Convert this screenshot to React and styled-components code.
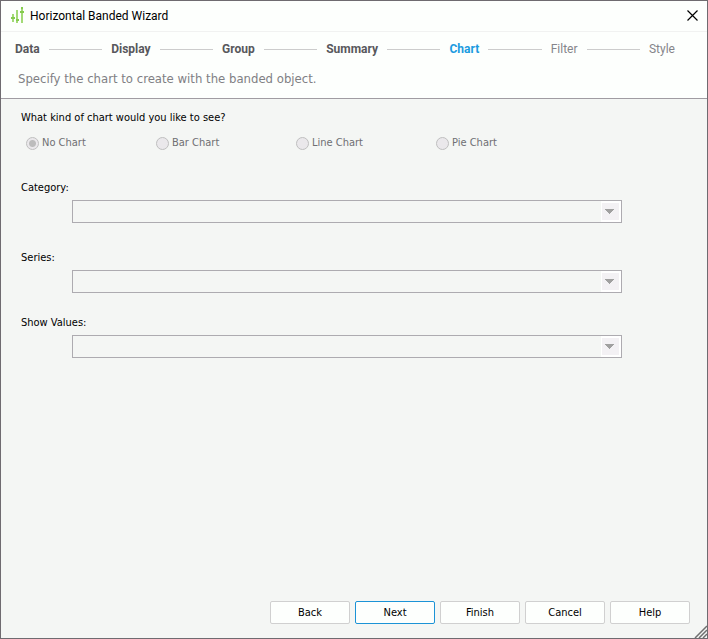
import React from "react";
import styled, { createGlobalStyle } from "styled-components";

const steps = ["Data", "Display", "Group", "Summary", "Chart", "Filter", "Style"];
const current = 4;
const charts = ["No Chart", "Bar Chart", "Line Chart", "Pie Chart"];
const actions = ["Back", "Next", "Finish", "Cancel", "Help"];

export default function App() {
  return (
    <>
      <GlobalStyle />
      <Window>
        {/* title bar */}
        <TitleBar>
          <Logo />
          <Title>Horizontal Banded Wizard</Title>
          <CloseButton type="button" aria-label="Close">
            <svg width="11" height="12" viewBox="0 0 11 12">
              <path d="M0.5 0.5L10.5 10.5M10.5 0.5L0.5 10.5" stroke="#000" strokeWidth="1.2" />
            </svg>
          </CloseButton>
        </TitleBar>

        {/* steps */}
        <Header>
          <Steps>
            {steps.map((step, i) => (
              <React.Fragment key={step}>
                {i > 0 && <StepLine aria-hidden="true" />}
                <Step $active={i === current} $pending={i > current}>
                  {step}
                </Step>
              </React.Fragment>
            ))}
          </Steps>
          <Description>Specify the chart to create with the banded object.</Description>
        </Header>

        {/* form */}
        <Form>
          <ChartTypes disabled>
            <legend>What kind of chart would you like to see?</legend>
            <Options>
              {charts.map((chart, i) => (
                <Option key={chart}>
                  <Radio type="radio" name="chart" defaultChecked={i === 0} />
                  {chart}
                </Option>
              ))}
            </Options>
          </ChartTypes>
          <SelectField id="category" label="Category:" $space={31} />
          <SelectField id="series" label="Series:" $space={28} />
          <SelectField id="values" label="Show Values:" $space={23} />
        </Form>

        {/* buttons */}
        <Footer>
          {actions.map((action) => (
            <Button key={action} type="button" $primary={action === "Next"}>
              {action}
            </Button>
          ))}
        </Footer>
        <Grip width="13" height="13" viewBox="0 0 13 13" aria-hidden="true">
          <path d="M1 13L13 1M5 13L13 5M9 13L13 9" stroke="#707070" strokeWidth="1.5" />
        </Grip>
      </Window>
    </>
  );
}

function Logo() {
  return (
    <svg width="13" height="18" viewBox="0 0 13 18" aria-hidden="true">
      <g fill="#a3da76">
        <rect x="1" y="7" width="2" height="8" />
        <rect x="5" y="3" width="2" height="13" />
        <rect x="10" y="0" width="2" height="16" />
      </g>
      <g fill="#84cb4e">
        <rect x="0" y="10" width="4" height="2" />
        <rect x="5" y="12" width="3" height="2" />
        <rect x="9" y="4" width="4" height="2" />
        <rect x="10" y="0" width="2" height="2" />
      </g>
    </svg>
  );
}

function SelectField({ id, label, $space }) {
  return (
    <Field $space={$space}>
      <label htmlFor={id}>{label}</label>
      <SelectBox>
        <Select id={id} disabled />
        <Arrow>
          <svg width="9" height="5" viewBox="0 0 9 5" shapeRendering="crispEdges">
            <path d="M0 0H9V1H8V2H7V3H6V4H5V5H4V4H3V3H2V2H1V1H0Z" fill="#a0a0a0" />
          </svg>
        </Arrow>
      </SelectBox>
    </Field>
  );
}

const GlobalStyle = createGlobalStyle`
  * {
    box-sizing: border-box;
  }
  body {
    margin: 0;
    color: #000;
    font-family: "DejaVu Sans Condensed", "Noto Sans", sans-serif;
    font-size: 11px;
    line-height: 14px;
  }
  button, select {
    font: inherit;
  }
`;

const Window = styled.div`
  position: relative;
  display: flex;
  flex-direction: column;
  min-height: 100vh;
  background: #f4f6f4;
  border: 1px solid #6f6b70;
`;

const TitleBar = styled.header`
  display: flex;
  align-items: center;
  gap: 6px;
  height: 31px;
  padding: 0 9px 0 10px;
  background: #fdfffd;
  border-bottom: 1px solid #f1f2f1;
`;

const Title = styled.h1`
  flex: 1;
  margin: 0;
  font-family: Roboto, sans-serif;
  font-size: 12px;
  font-weight: 400;
  line-height: 16px;
`;

const CloseButton = styled.button`
  display: flex;
  padding: 0;
  background: none;
  border: 0;
`;

const Header = styled.div`
  height: 67px;
  padding: 9px 32px 0 14px;
  background: #fdfffd;
  border-bottom: 1px solid #a09ca2;
`;

const Steps = styled.div`
  display: flex;
  align-items: center;
  gap: 9px;
`;

const Step = styled.span`
  color: ${(p) => (p.$active ? "#1c9be0" : p.$pending ? "#85858a" : "#58585c")};
  font-family: Roboto, sans-serif;
  font-size: 12px;
  font-weight: ${(p) => (p.$pending ? 400 : 700)};
  line-height: 16px;
`;

const StepLine = styled.i`
  flex: 1;
  height: 1px;
  background: #cccccc;
`;

const Description = styled.p`
  margin: 13px 0 0 3px;
  color: #808084;
  font-size: 13px;
  line-height: 18px;
`;

const Form = styled.form`
  flex: 1;
  padding: 12px 85px 0 20px;
`;

const ChartTypes = styled.fieldset`
  margin: 0;
  padding: 0;
  border: 0;

  legend {
    padding: 0;
  }
`;

const Options = styled.div`
  display: grid;
  grid-template-columns: 130px 140px 140px auto;
  padding: 11px 0 0 5px;
`;

const Option = styled.label`
  display: flex;
  align-items: center;
  gap: 3px;
  color: #6f6f73;
`;

const Radio = styled.input`
  appearance: none;
  width: 13px;
  height: 13px;
  margin: 0;
  background: #eae8eb;
  border: 1px solid #bfbfbf;
  border-radius: 50%;

  &:checked {
    background: radial-gradient(circle, #bcbcbc 3px, #eae8eb 4px);
  }
`;

const Field = styled.div`
  display: flex;
  flex-direction: column;
  gap: 5px;
  margin-top: ${(p) => p.$space}px;
`;

const SelectBox = styled.div`
  position: relative;
  margin-left: 51px;
`;

const Select = styled.select`
  appearance: none;
  display: block;
  width: 100%;
  height: 23px;
  background: #f4f6f4;
  border: 1px solid #adabb0;
  border-radius: 0;
  opacity: 1;
`;

const Arrow = styled.span`
  position: absolute;
  top: 1px;
  right: 1px;
  display: flex;
  align-items: center;
  justify-content: center;
  width: 20px;
  height: 21px;
  background: #f3f1f4;
  border: 2px solid #fff;
  border-left-width: 1px;
  padding-right: 2px;
  pointer-events: none;
`;

const Footer = styled.footer`
  display: flex;
  justify-content: flex-end;
  gap: 5px;
  padding: 0 17px 14px;
`;

const Button = styled.button`
  width: 80px;
  height: 23px;
  padding: 0;
  color: #000;
  background: #fdfffd;
  border: 1px solid ${(p) => (p.$primary ? "#1c93d6" : "#d0d0d0")};
  border-radius: 2px;
`;

const Grip = styled.svg`
  position: absolute;
  right: 0;
  bottom: 0;
`;
